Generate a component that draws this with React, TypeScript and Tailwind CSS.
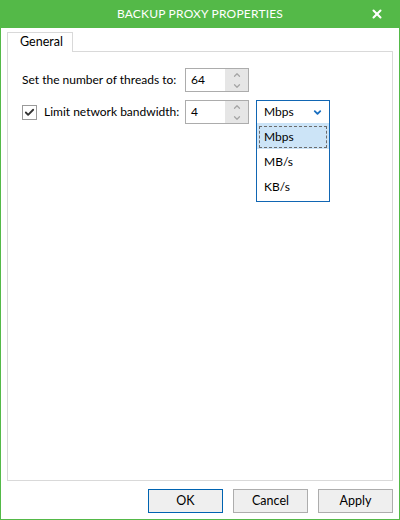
import { Check, ChevronDown, ChevronUp, X } from 'lucide-react';

function Spinner({ value }: { value: string }) {
  return (
    <div className="flex h-[24px] w-[64px] shrink-0 border border-[#acacac] bg-white">
      <span className="flex-1 pl-[5px] leading-[22px]">{value}</span>
      <div className="flex w-[23px] flex-col bg-[#e6e6e6]">
        <div className="flex flex-1 items-center justify-center">
          <ChevronUp className="h-[10px] w-[10px] text-[#a6a6a6]" strokeWidth={3} />
        </div>
        <div className="flex flex-1 items-center justify-center">
          <ChevronDown className="h-[10px] w-[10px] text-[#a6a6a6]" strokeWidth={3} />
        </div>
      </div>
    </div>
  );
}

function DialogButton({ label, primary }: { label: string; primary?: boolean }) {
  return (
    <button
      className={`h-[24px] w-[75px] border bg-[#efefef] text-[12.5px] text-black ${
        primary ? 'border-[#0063b1]' : 'border-[#adadad]'
      }`}
    >
      {label}
    </button>
  );
}

export default function App() {
  const units = ['Mbps', 'MB/s', 'KB/s'];

  return (
    <div
      className="flex h-[520px] w-[400px] flex-col whitespace-nowrap border-x border-b border-[#54b948] bg-white text-[12px] text-black"
      style={{ fontFamily: 'Lato, "Noto Sans", sans-serif' }}
    >
      <div className="relative -mx-px flex h-[28px] shrink-0 items-center justify-center bg-[#54b948]">
        <span className="text-[12px] tracking-[0.2px] text-white">BACKUP PROXY PROPERTIES</span>
        <X className="absolute right-[16px] top-[7px] h-[14px] w-[14px] text-white" strokeWidth={3.5} />
      </div>

      <div className="flex flex-1 flex-col px-[6px] pt-[4px]">
        <div className="relative z-10 -mb-px flex">
          <div className="h-[20px] w-[66px] border-x border-t border-[#d9d9d9] bg-white pl-[12px] text-[12.5px] leading-[18px]">
            General
          </div>
        </div>

        <div className="flex h-[430px] flex-col gap-[8px] border border-[#d9d9d9] px-[14px] pt-[16px]">
          <div className="flex items-center">
            <span className="w-[163px] shrink-0">Set the number of threads to:</span>
            <Spinner value="64" />
          </div>

          <div className="flex items-center">
            <div className="flex w-[163px] shrink-0 items-center gap-[7px]">
              <span className="flex h-[15px] w-[15px] items-center justify-center border border-[#9a9a9a] bg-white">
                <Check className="h-[11px] w-[11px] text-[#333333]" strokeWidth={4} />
              </span>
              <span>Limit network bandwidth:</span>
            </div>
            <Spinner value="4" />

            <div className="relative ml-[7px]">
              <div className="flex h-[24px] w-[74px] items-center justify-between border border-[#1166b3] bg-white pl-[7px] pr-[6px]">
                <span>Mbps</span>
                <ChevronDown className="h-[11px] w-[11px] text-[#1a6fc0]" strokeWidth={4} />
              </div>
              <div className="absolute left-0 top-[23px] w-[74px] border-x border-b border-[#1166b3] bg-white pb-[2px]">
                {units.map((u, i) =>
                  i === 0 ? (
                    <div key={u} className="h-[26px] bg-[#cce4f7] px-[2px] pb-[1px] pt-[3px]">
                      <div className="h-full border border-dashed border-[#6b6b6b] pl-[4px] leading-[20px]">{u}</div>
                    </div>
                  ) : (
                    <div key={u} className="h-[25px] pl-[7px] leading-[25px]">
                      {u}
                    </div>
                  ),
                )}
              </div>
            </div>
          </div>
        </div>

        <div className="mt-[8px] flex justify-end gap-[10px] pb-[6px]">
          <DialogButton label="OK" primary />
          <DialogButton label="Cancel" />
          <DialogButton label="Apply" />
        </div>
      </div>
    </div>
  );
}
